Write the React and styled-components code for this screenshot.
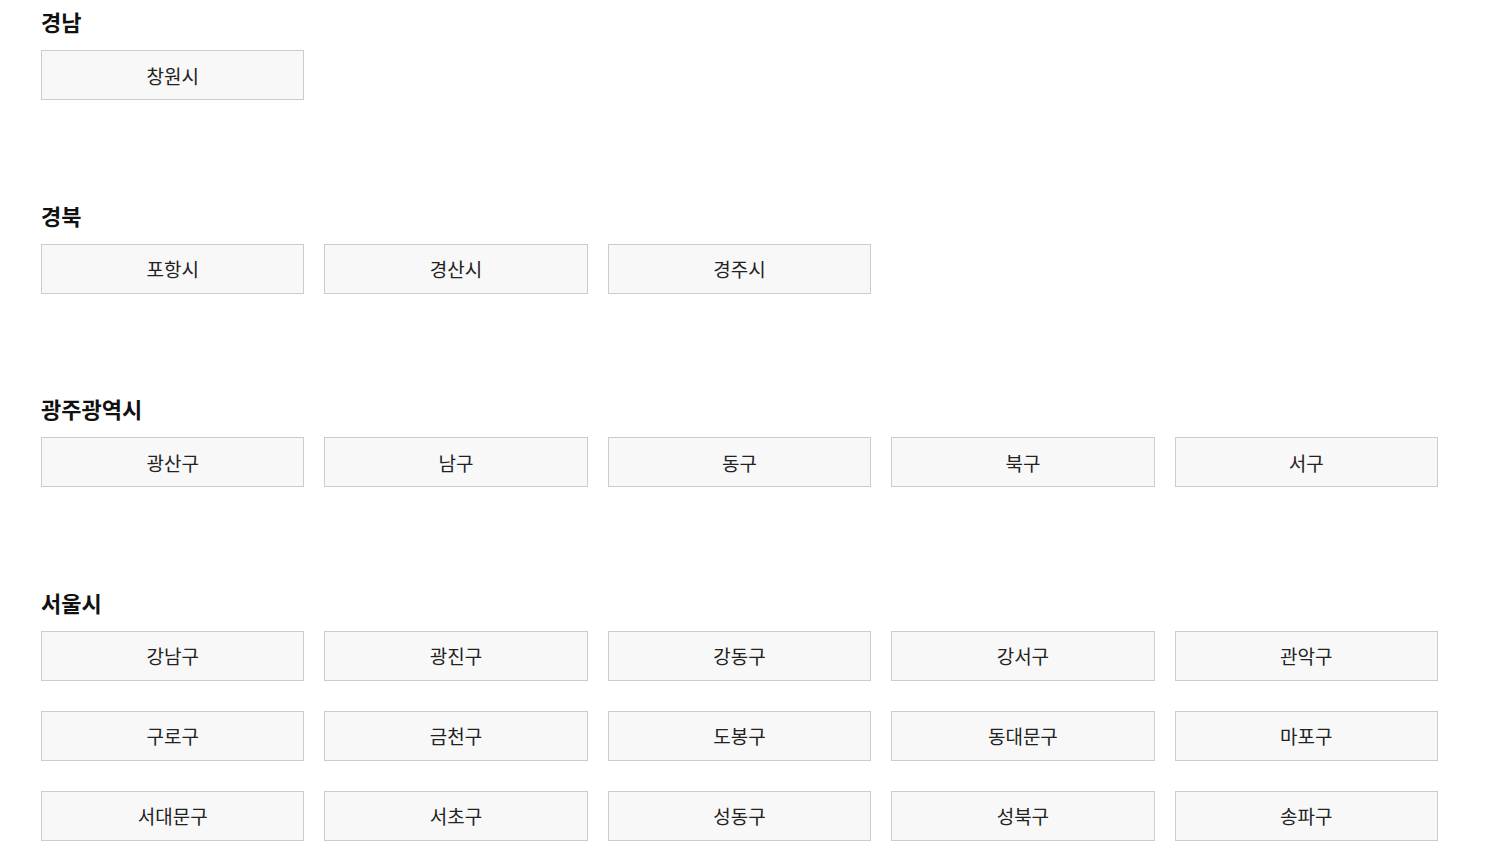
import React from "react";
import styled, { createGlobalStyle } from "styled-components";

const regions = [
  { name: "경남", cities: ["창원시"] },
  { name: "경북", cities: ["포항시", "경산시", "경주시"] },
  { name: "광주광역시", cities: ["광산구", "남구", "동구", "북구", "서구"] },
  {
    name: "서울시",
    cities: [
      "강남구", "광진구", "강동구", "강서구", "관악구",
      "구로구", "금천구", "도봉구", "동대문구", "마포구",
      "서대문구", "서초구", "성동구", "성북구", "송파구",
    ],
  },
];

function App() {
  return (
    <>
      <GlobalStyle />
      <Wrapper>
        {regions.map((region) => (
          <Section key={region.name}>
            <Title>{region.name}</Title>
            <Grid>
              {region.cities.map((city) => (
                <CityButton key={city} type="button">
                  {city}
                </CityButton>
              ))}
            </Grid>
          </Section>
        ))}
      </Wrapper>
    </>
  );
}

export default App;

const GlobalStyle = createGlobalStyle`
  body {
    margin: 0;
    background: #fff;
    font-family: "Noto Sans CJK KR", "Noto Sans", sans-serif;
  }
`;

const Wrapper = styled.div`
  width: 1397px;
  padding: 6px 0 0 41px;
`;

const Section = styled.section`
  margin-bottom: 99.5px;
`;

const Title = styled.h2`
  margin: 0 0 14px;
  font-size: 22px;
  line-height: 30px;
  font-weight: 700;
  color: #111;
`;

const Grid = styled.div`
  display: grid;
  grid-template-columns: repeat(5, 1fr);
  column-gap: 20px;
  row-gap: 30px;
`;

const CityButton = styled.button`
  height: 50px;
  box-sizing: border-box;
  border: 1px solid #cccccc;
  background: #f8f8f8;
  color: #222;
  font-family: inherit;
  font-size: 19px;
  cursor: pointer;
  padding: 0;
`;
